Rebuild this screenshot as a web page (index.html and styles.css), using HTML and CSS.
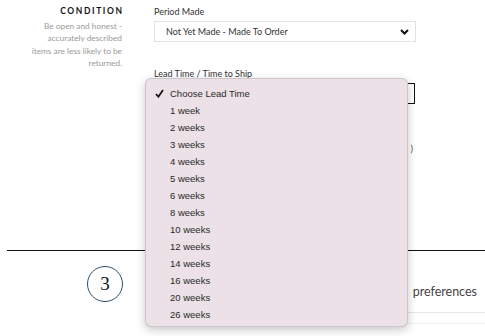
FILE: index.html
```html
<!DOCTYPE html>
<html>
<head>
<meta charset="utf-8">
<link rel="stylesheet" href="styles.css">
</head>
<body>
<div class="page">
  <section class="row">
    <div class="side">
      <h3 class="side-title">CONDITION</h3>
      <p class="side-desc">Be open and honest -<br>accurately described<br>items are less likely to be<br>returned.</p>
    </div>
    <div class="fields">
      <div class="field-label">Period Made</div>
      <div class="select">
        <span>Not Yet Made - Made To Order</span>
        <svg class="chev" width="9" height="6" viewBox="0 0 9 6"><path d="M1 1l3.5 3.5L8 1" fill="none" stroke="#111" stroke-width="2"/></svg>
      </div>
      <div class="field-label lead">Lead Time / Time to Ship</div>
      <div class="select-wrap">
        <div class="select focused">
          <span>Choose Lead Time</span>
          <svg class="chev" width="9" height="6" viewBox="0 0 9 6"><path d="M1 1l3.5 3.5L8 1" fill="none" stroke="#111" stroke-width="2"/></svg>
        </div>
        <ul class="menu">
          <li class="item checked"><svg class="check" width="9" height="9" viewBox="0 0 9 9"><path d="M1 5l2.4 2.8L8 1" fill="none" stroke="#111" stroke-width="1.7"/></svg>Choose Lead Time</li>
          <li class="item">1 week</li>
          <li class="item">2 weeks</li>
          <li class="item">3 weeks</li>
          <li class="item">4 weeks</li>
          <li class="item">5 weeks</li>
          <li class="item">6 weeks</li>
          <li class="item">8 weeks</li>
          <li class="item">10 weeks</li>
          <li class="item">12 weeks</li>
          <li class="item">14 weeks</li>
          <li class="item">16 weeks</li>
          <li class="item">20 weeks</li>
          <li class="item">26 weeks</li>
        </ul>
      </div>
      <p class="hint">Handling time (optional<span class="paren">)</span></p>
    </div>
  </section>
  <hr class="divider">
  <section class="step">
    <div class="step-num">3</div>
    <div class="step-body">
      <div class="step-title">Shipping <span class="word">preferences</span></div>
      <div class="step-input"></div>
    </div>
  </section>
</div>
</body>
</html>
```
FILE: styles.css
```css
* { box-sizing: border-box; }
html, body { margin: 0; padding: 0; background: #fff; }
body { width: 485px; height: 336px; overflow: hidden; font-family: Lato, "Open Sans", sans-serif; color: #333; }
.page { position: relative; }

.row {
  display: grid;
  grid-template-columns: 122px 262px;
  column-gap: 32px;
  padding-top: 6px;
  height: 250px;
}
.side { text-align: right; }
.side-title {
  margin: 0;
  font-size: 8.5px;
  font-weight: 700;
  letter-spacing: 1.6px;
  line-height: 11px;
  color: #111;
  margin-right: -1.6px;
}
.side-desc {
  margin: 3px 0 0;
  font-size: 8.3px;
  line-height: 12.3px;
  color: #9a9a9a;
}

.fields { display: flex; flex-direction: column; }
.field-label {
  font-size: 9px;
  line-height: 11px;
  color: #333;
}
.select {
  margin-top: 4px;
  height: 21px;
  border: 1px solid #e2e2e2;
  display: flex;
  align-items: center;
  justify-content: space-between;
  padding: 0 6px 0 11px;
  font-size: 9px;
  color: #333;
}
.select.focused { border-color: #111; margin-top: 0; }
.field-label.lead { margin-top: 26px; }
.select-wrap { position: relative; margin-top: 4px; width: 261px; }

.menu {
  position: absolute;
  left: -9px;
  top: -5px;
  width: 263px;
  height: 249px;
  margin: 0;
  padding: 6px 0 0;
  list-style: none;
  background: #ebe1e6;
  border: 1px solid rgba(0,0,0,0.12);
  border-radius: 6px;
  box-shadow: 0 3px 10px rgba(0,0,0,0.22);
  z-index: 5;
}
.item {
  position: relative;
  height: 17px;
  line-height: 17px;
  padding-left: 24px;
  font-family: "Liberation Sans", Arial, sans-serif;
  font-size: 9.5px;
  color: #2a2a2a;
}
.check { position: absolute; left: 9px; top: 4px; }

.hint {
  margin: 39px 0 0;
  text-align: right;
  font-size: 9.5px;
  line-height: 11px;
  color: #555;
  padding-right: 3px;
}
.paren { margin-left: 4px; }

.divider {
  margin: 0 0 0 7px;
  border: 0;
  border-top: 1px solid #111;
  height: 0;
}

.step {
  display: grid;
  grid-template-columns: 124px 1fr;
  height: 90px;
}
.step-num {
  margin: 15px 0 0 87px;
  width: 36px;
  height: 36px;
  border: 1px solid #2e4e6a;
  border-radius: 50%;
  display: flex;
  align-items: center;
  justify-content: center;
  font-family: "Liberation Serif", "DejaVu Serif", serif;
  font-size: 19px;
  color: #111;
}
.step-body { padding-top: 33px; }
.step-title {
  text-align: right;
  padding-right: 8px;
  font-size: 12.5px;
  line-height: 16px;
  color: #444;
}
.word { margin-left: 6px; }
.step-input {
  margin: 12px 0 0 30px;
  height: 12px;
  border-top: 1px solid #e6e6e6;
  border-bottom: 1px solid #efefef;
}
```
